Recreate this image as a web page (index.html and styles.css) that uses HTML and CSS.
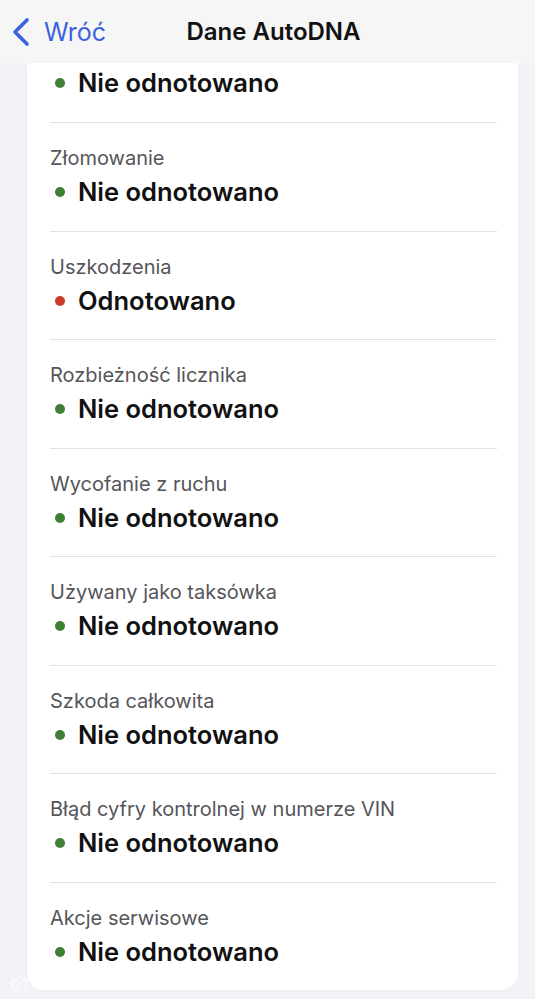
FILE: index.html
```html
<!DOCTYPE html>
<html lang="pl">
<head>
    <meta charset="UTF-8">
    <meta name="viewport" content="width=device-width, initial-scale=1.0">
    <title>Dane AutoDNA</title>
    <link rel="stylesheet" href="styles.css">
</head>
<body>
    <header class="nav">
        <a class="back" href="#">
            <svg class="chevron" width="20" height="30" viewBox="0 0 20 30">
                <path d="M16 3 L4 15 L16 27" fill="none" stroke="#3b62e0" stroke-width="3.6" stroke-linecap="round" stroke-linejoin="round"/>
            </svg>
            <span>Wróć</span>
        </a>
        <h1 class="title">Dane AutoDNA</h1>
        <span></span>
    </header>

    <main class="content">
        <div class="card">
            <div class="row first">
                <div class="value"><span class="dot ok"></span>Nie odnotowano</div>
            </div>
            <div class="row">
                <div class="label">Złomowanie</div>
                <div class="value"><span class="dot ok"></span>Nie odnotowano</div>
            </div>
            <div class="row">
                <div class="label">Uszkodzenia</div>
                <div class="value"><span class="dot bad"></span>Odnotowano</div>
            </div>
            <div class="row">
                <div class="label">Rozbieżność licznika</div>
                <div class="value"><span class="dot ok"></span>Nie odnotowano</div>
            </div>
            <div class="row">
                <div class="label">Wycofanie z ruchu</div>
                <div class="value"><span class="dot ok"></span>Nie odnotowano</div>
            </div>
            <div class="row">
                <div class="label">Używany jako taksówka</div>
                <div class="value"><span class="dot ok"></span>Nie odnotowano</div>
            </div>
            <div class="row">
                <div class="label">Szkoda całkowita</div>
                <div class="value"><span class="dot ok"></span>Nie odnotowano</div>
            </div>
            <div class="row">
                <div class="label">Błąd cyfry kontrolnej w numerze VIN</div>
                <div class="value"><span class="dot ok"></span>Nie odnotowano</div>
            </div>
            <div class="row last">
                <div class="label">Akcje serwisowe</div>
                <div class="value"><span class="dot ok"></span>Nie odnotowano</div>
            </div>
        </div>
    </main>

    <div class="watermark">OTOMOTO</div>
</body>
</html>
```

FILE: styles.css
```css
body {
    margin: 0;
    font-family: Inter, "Noto Sans", sans-serif;
    background-color: #f3f3f7;
    color: #111;
}
.nav {
    height: 63px;
    display: grid;
    grid-template-columns: 1fr auto 1fr;
    align-items: center;
    background-color: #f6f6f6;
}
.back {
    display: flex;
    align-items: center;
    gap: 13px;
    padding-left: 11px;
    color: #3b62e0;
    text-decoration: none;
    font-size: 25px;
}
.title {
    margin: 0;
    font-size: 24px;
    font-weight: 600;
    padding-left: 12px;
}
.content {
    padding: 0 17px 9px 27px;
}
.card {
    background-color: #fff;
    border-radius: 0 0 18px 18px;
    padding: 0 21px 0 23px;
    box-shadow: 0 1px 3px rgba(0, 0, 0, 0.03);
}
.row {
    padding: 24px 0 24.5px;
    border-bottom: 1px solid #e2e2e5;
}
.row.first {
    padding-top: 6px;
    padding-bottom: 25px;
}
.row.last {
    border-bottom: none;
    padding-bottom: 24px;
}
.label {
    font-size: 20px;
    line-height: 22px;
    color: #55555a;
    margin-bottom: 9px;
}
.value {
    display: flex;
    align-items: center;
    font-size: 25.5px;
    line-height: 28px;
    font-weight: 600;
}
.dot {
    width: 10px;
    height: 10px;
    border-radius: 50%;
    margin: 0 13px 0 5px;
}
.dot.ok {
    background-color: #3f7f36;
}
.dot.bad {
    background-color: #cc3a2c;
}
.watermark {
    position: absolute;
    left: 10px;
    top: 976px;
    font-size: 14px;
    font-weight: 700;
    letter-spacing: 1px;
    color: rgba(255, 255, 255, 0.6);
}
```
